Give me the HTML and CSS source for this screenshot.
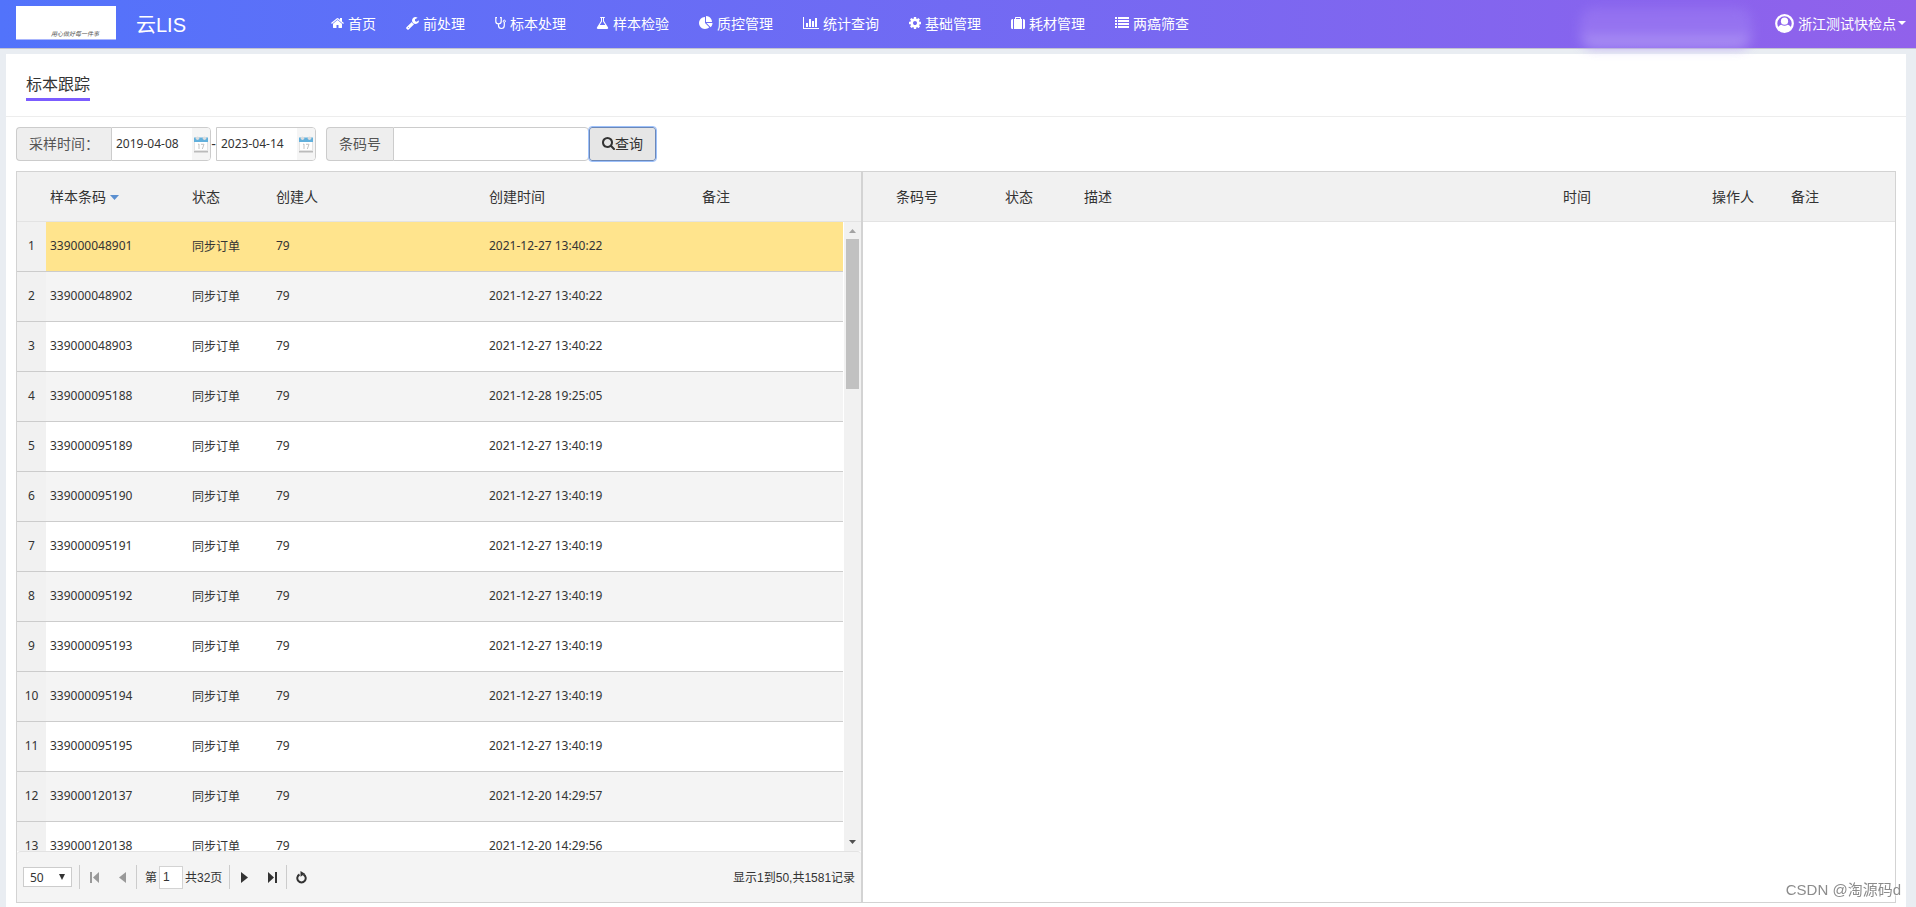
FILE: index.html
```html
<!DOCTYPE html>
<html lang="zh-CN">
<head>
<meta charset="utf-8">
<title>云LIS - 标本跟踪</title>
<link rel="stylesheet" href="styles.css">
</head>
<body>
<header class="topbar">
  <div class="logo"><span class="logo-slogan">用心做好每一件事</span></div>
  <div class="brand">云LIS</div>
  <nav class="menu">
    <a class="menu-item" href="#"><svg width="13" height="14" viewBox="64 0 1664 1792"><path d="M1472 992v480q0 26-19 45t-45 19h-384v-384h-256v384h-384q-26 0-45-19t-19-45v-480q0-1 .5-3t.5-3l575-474 575 474q1 2 1 6zm223-69l-62 74q-8 9-21 11h-3q-13 0-21-7l-692-577-692 577q-12 8-24 7-13-2-21-11l-62-74q-8-10-7-23.5t11-21.5l719-599q32-26 76-26t76 26l244 204v-195q0-14 9-23t23-9h192q14 0 23 9t9 23v408l219 182q10 8 11 21.5t-7 23.5z"/></svg>首页</a>
    <a class="menu-item" href="#"><svg width="13" height="14" viewBox="64 0 1664 1792"><path d="M448 1472q0-26-19-45t-45-19-45 19-19 45 19 45 45 19 45-19 19-45zm644-420l-682 682q-37 37-90 37-52 0-91-37l-106-108q-38-36-38-90 0-53 38-91l681-681q39 98 114.5 173.5t173.5 114.5zm634-435q0 39-23 106-47 134-164.5 217.5t-258.5 83.5q-185 0-316.5-131.5t-131.5-316.5 131.5-316.5 316.5-131.5q58 0 121.5 16.5t107.5 46.5q16 11 16 28t-16 28l-293 169v224l193 107q5-3 79-48.5t135.5-81 70.5-35.5q15 0 23.5 10t8.5 25z"/></svg>前处理</a>
    <a class="menu-item" href="#"><svg width="11" height="14" viewBox="0 0 11 14"><path d="M2 1.6H.8v3.6a2.7 2.7 0 0 0 5.4 0V1.6H5M3.5 8v1.6a2.9 2.9 0 0 0 5.8 0V6.2" fill="none" stroke="currentColor" stroke-width="1.2"/><circle cx="9.3" cy="5.2" r="1.1" fill="none" stroke="currentColor"/></svg>标本处理</a>
    <a class="menu-item" href="#"><svg width="13" height="14" viewBox="64 0 1664 1792"><path d="M1591 1448q56 89 21.500 152.500t-140.500 63.500h-1152q-106 0-140.500-63.500t21.500-152.500l503-793v-399h-64q-26 0-45-19t-19-45 19-45 45-19h512q26 0 45 19t19 45-19 45-45 19h-64v399zm-779-725l-272 429h712l-272-429-20-31v-436h-128v436z"/></svg>样本检验</a>
    <a class="menu-item" href="#"><svg width="14" height="14" viewBox="0 0 1792 1792"><path d="M768 890l546 546q-106 108-247.500 168t-298.500 60q-209 0-385.500-103t-279.500-279.500-103-385.500 103-385.500 279.500-279.500 385.500-103v762zm187 6h773q0 157-60 298.500t-168 247.500zm709-128h-768v-768q209 0 385.500 103t279.500 279.500 103 385.500z"/></svg>质控管理</a>
    <a class="menu-item" href="#"><svg width="16" height="14" viewBox="0 0 2048 1792"><path d="M640 896v512h-256v-512h256zm384-512v1024h-256v-1024h256zm1024 1152v128h-2048v-1536h128v1408h1920zm-640-896v768h-256v-768h256zm384-384v1152h-256v-1152h256z"/></svg>统计查询</a>
    <a class="menu-item" href="#"><svg width="12" height="14" viewBox="128 0 1536 1792"><path d="M1152 896q0-106-75-181t-181-75-181 75-75 181 75 181 181 75 181-75 75-181zm512-109v222q0 12-8 23t-20 13l-185 28q-19 54-39 91 35 50 107 138 10 12 10 25t-9 23q-27 37-99 108t-94 71q-12 0-26-9l-138-108q-44 23-91 38-16 136-29 186-7 28-36 28h-222q-14 0-24.500-8.500t-11.500-21.500l-28-184q-49-16-90-37l-141 107q-10 9-25 9-14 0-25-11-126-114-165-168-7-10-7-23 0-12 8-23 15-21 51-66.500t54-70.500q-27-50-41-99l-183-27q-13-2-21-12.500t-8-23.500v-222q0-12 8-23t19-13l186-28q14-46 39-92-40-57-107-138-10-12-10-24 0-10 9-23 26-36 98.500-107.500t94.500-71.500q13 0 26 10l138 107q44-23 91-38 16-136 29-186 7-28 36-28h222q14 0 24.500 8.500t11.500 21.500l28 184q49 16 90 37l142-107q9-9 24-9 13 0 25 10 129 119 165 170 7 8 7 22 0 12-8 23-15 21-51 66.500t-54 70.500q26 50 41 98l183 28q13 2 21 12.500t8 23.500z"/></svg>基础管理</a>
    <a class="menu-item" href="#"><svg width="14" height="14" viewBox="0 0 14 14"><path d="M1.500 3H2v10h-.5A1.500 1.500 0 0 1 0 11.500v-7A1.500 1.500 0 0 1 1.500 3zM3 3h1V1.700C4 1.300 4.300 1 4.700 1h4.600c.4 0 .7.300.7.700V3h1v10H3zm2-1v1h4V2zM12 3h.5A1.500 1.500 0 0 1 14 4.500v7a1.500 1.500 0 0 1-1.500 1.500H12z"/></svg>耗材管理</a>
    <a class="menu-item" href="#"><svg width="14" height="14" viewBox="0 0 14 14"><path d="M0 1h2v2H0zM3 1h11v2H3zM0 4h2v2H0zM3 4h11v2H3zM0 7h2v2H0zM3 7h11v2H3zM0 10h2v2H0zM3 10h11v2H3z"/></svg>两癌筛查</a>
  </nav>
  <div class="notice-haze"></div>
  <button class="account" type="button">
    <svg width="19" height="19" viewBox="0 0 19 19"><circle cx="9.500" cy="9.500" r="8.300" fill="none" stroke="currentColor" stroke-width="2.200"/><circle cx="9.500" cy="7.200" r="3.600"/><path d="M2.500 14.500c1-2.700 2.600-3.600 3.900-3.800 1.800 1.500 4.400 1.500 6.200 0 1.300.2 2.900 1.100 3.900 3.800-3 4.500-11 4.500-14 0z"/></svg>
    <span>浙江测试快检点</span>
    <svg class="account-caret" width="8" height="4" viewBox="0 0 8 4"><path d="M0 0h8L4 4z"/></svg>
  </button>
</header>

<main class="page">
  <div class="title-bar"><h1 class="title">标本跟踪</h1></div>

  <form class="filters">
    <div class="field">
      <label class="addon addon-wide" for="from">采样时间：</label>
      <div class="date">
        <input id="from" type="text" value="2019-04-08">
        <button class="date-button" type="button" aria-label="选择日期"><svg width="14" height="17" viewBox="0 0 14 17"><path d="M0 5h14v11H0z" fill="#e4e4e4"/><path d="M1 6h12v8H1z" fill="#fff"/><path d="M0 15h14v1.500H0z" fill="#bbb"/><path d="M0 1.500h14V6H0z" fill="#62b0dc"/><circle cx="3.500" cy="2.200" r="1.700" fill="#ddd"/><circle cx="10.500" cy="2.200" r="1.700" fill="#ddd"/><path d="M4 8.500l1-.5v5M7 8.300h3L8.300 13" fill="none" stroke="#c4c4c4"/></svg></button>
      </div>
    </div>
    <span class="range-dash">-</span>
    <div class="date">
      <input type="text" value="2023-04-14" aria-label="结束日期">
      <button class="date-button" type="button" aria-label="选择日期"><svg width="14" height="17" viewBox="0 0 14 17"><path d="M0 5h14v11H0z" fill="#e4e4e4"/><path d="M1 6h12v8H1z" fill="#fff"/><path d="M0 15h14v1.500H0z" fill="#bbb"/><path d="M0 1.500h14V6H0z" fill="#62b0dc"/><circle cx="3.500" cy="2.200" r="1.700" fill="#ddd"/><circle cx="10.500" cy="2.200" r="1.700" fill="#ddd"/><path d="M4 8.500l1-.5v5M7 8.300h3L8.300 13" fill="none" stroke="#c4c4c4"/></svg></button>
    </div>
    <div class="field barcode-field">
      <label class="addon" for="barcode">条码号</label>
      <input class="barcode" id="barcode" type="text">
    </div>
    <button class="search" type="button"><svg width="13" height="14" viewBox="64 0 1664 1792"><path d="M1216 832q0-185-131.500-316.500t-316.500-131.500-316.500 131.500-131.500 316.500 131.500 316.500 316.500 131.500 316.500-131.500 131.500-316.500zm512 832q0 52-38 90t-90 38q-54 0-90-38l-343-342q-179 124-399 124-143 0-273.500-55.500t-225-150-150-225-55.500-273.500 55.500-273.500 150-225 225-150 273.500-55.500 273.500 55.500 225 150 150 225 55.500 273.500q0 220-124 399l343 343q37 37 37 90z"/></svg>查询</button>
  </form>

  <div class="split">
    <section class="pane pane-list">
      <div class="grid-area">
        <table class="grid">
          <colgroup><col class="c-num"><col class="c-code"><col class="c-state"><col class="c-user"><col class="c-time"><col></colgroup>
          <thead><tr><th></th><th>样本条码<svg class="sort" width="9" height="5" viewBox="0 0 9 5"><path d="M0 0h9L4.500 5z"/></svg></th><th>状态</th><th>创建人</th><th>创建时间</th><th>备注</th></tr></thead>
          <tbody>
            <tr class="selected"><td>1</td><td>339000048901</td><td>同步订单</td><td>79</td><td>2021-12-27 13:40:22</td><td></td></tr>
            <tr><td>2</td><td>339000048902</td><td>同步订单</td><td>79</td><td>2021-12-27 13:40:22</td><td></td></tr>
            <tr><td>3</td><td>339000048903</td><td>同步订单</td><td>79</td><td>2021-12-27 13:40:22</td><td></td></tr>
            <tr><td>4</td><td>339000095188</td><td>同步订单</td><td>79</td><td>2021-12-28 19:25:05</td><td></td></tr>
            <tr><td>5</td><td>339000095189</td><td>同步订单</td><td>79</td><td>2021-12-27 13:40:19</td><td></td></tr>
            <tr><td>6</td><td>339000095190</td><td>同步订单</td><td>79</td><td>2021-12-27 13:40:19</td><td></td></tr>
            <tr><td>7</td><td>339000095191</td><td>同步订单</td><td>79</td><td>2021-12-27 13:40:19</td><td></td></tr>
            <tr><td>8</td><td>339000095192</td><td>同步订单</td><td>79</td><td>2021-12-27 13:40:19</td><td></td></tr>
            <tr><td>9</td><td>339000095193</td><td>同步订单</td><td>79</td><td>2021-12-27 13:40:19</td><td></td></tr>
            <tr><td>10</td><td>339000095194</td><td>同步订单</td><td>79</td><td>2021-12-27 13:40:19</td><td></td></tr>
            <tr><td>11</td><td>339000095195</td><td>同步订单</td><td>79</td><td>2021-12-27 13:40:19</td><td></td></tr>
            <tr><td>12</td><td>339000120137</td><td>同步订单</td><td>79</td><td>2021-12-20 14:29:57</td><td></td></tr>
            <tr><td>13</td><td>339000120138</td><td>同步订单</td><td>79</td><td>2021-12-20 14:29:56</td><td></td></tr>
          </tbody>
        </table>
        <div class="scroll">
          <div class="scroll-head"></div>
          <div class="scroll-track">
            <svg width="7" height="4" viewBox="0 0 7 4"><path d="M0 4h7L3.500 0z" fill="#a3a3a3"/></svg>
            <div class="scroll-thumb"></div>
            <svg class="scroll-down" width="7" height="4" viewBox="0 0 7 4"><path d="M0 0h7L3.500 4z" fill="#505050"/></svg>
          </div>
        </div>
      </div>
      <footer class="pager">
        <div class="page-size">
          <select aria-label="每页条数"><option>50</option></select>
          <svg class="page-size-arrow" width="6" height="6" viewBox="0 0 6 6"><path d="M0 0h6L3 6z"/></svg>
        </div>
        <i class="sep"></i>
        <button class="nav-button" type="button" aria-label="首页" disabled><svg width="9" height="11" viewBox="0 0 9 11"><path d="M0 0h2v11H0zM9 0v11L3 5.500z"/></svg></button>
        <button class="nav-button" type="button" aria-label="上一页" disabled><svg width="7" height="11" viewBox="0 0 7 11"><path d="M7 0v11L0 5.500z"/></svg></button>
        <i class="sep"></i>
        <label class="page-label" for="pageno">第</label>
        <input class="page-no" id="pageno" type="text" value="1">
        <span class="page-label">共32页</span>
        <i class="sep"></i>
        <button class="nav-button" type="button" aria-label="下一页"><svg width="7" height="11" viewBox="0 0 7 11"><path d="M0 0v11l7-5.500z"/></svg></button>
        <button class="nav-button" type="button" aria-label="末页"><svg width="9" height="11" viewBox="0 0 9 11"><path d="M7 0h2v11H7zM0 0v11l6-5.500z"/></svg></button>
        <i class="sep"></i>
        <button class="nav-button" type="button" aria-label="刷新"><svg width="11" height="13" viewBox="0 0 11 13"><path d="M3.500 3.500A4.200 4.200 0 1 0 7.500 3.500" fill="none" stroke="currentColor" stroke-width="2"/><path d="M4.500 0l4.500 2.800-4.500 3z"/></svg></button>
        <span class="summary">显示1到50,共1581记录</span>
      </footer>
    </section>

    <section class="pane pane-detail">
      <table class="grid">
        <colgroup><col class="c-num"><col class="d-code"><col class="d-state"><col><col class="d-time"><col class="d-user"><col class="d-note"></colgroup>
        <thead><tr><th></th><th>条码号</th><th>状态</th><th>描述</th><th>时间</th><th>操作人</th><th>备注</th></tr></thead>
      </table>
    </section>
  </div>
</main>
<div class="watermark">CSDN @淘源码d</div>
</body>
</html>
```

FILE: styles.css
```css
* { box-sizing: border-box; }

body {
  margin: 0;
  height: 100vh;
  overflow: hidden;
  display: flex;
  flex-direction: column;
  background: #e9edf2;
  color: #333;
  font-family: "Liberation Sans", "Noto Sans CJK SC", sans-serif;
  font-size: 14px;
}

input, button, select { font: inherit; color: inherit; }
button { cursor: pointer; }
svg { flex: none; fill: currentColor; }

.topbar {
  position: relative;
  flex: none;
  display: flex;
  align-items: center;
  height: 49px;
  padding: 0 10px 2px 16px;
  border-bottom: 1px solid #c3c3cf;
  background: linear-gradient(90deg, #5273fb, #9161eb) padding-box;
  color: #fff;
}

.logo {
  display: flex;
  justify-content: flex-end;
  align-items: flex-end;
  width: 100px;
  height: 34px;
  padding: 0 17px 1px 0;
  background: #fff;
  border-bottom: 1px solid #aab6fd;
  color: #555;
}
.logo-slogan { font-size: 6px; line-height: 8px; font-style: italic; white-space: nowrap; }
.brand { width: 195px; padding-left: 20px; font-size: 20px; }

.menu { display: flex; gap: 30px; padding-left: 20px; }
.menu-item { display: flex; align-items: center; gap: 4px; color: #fff; text-decoration: none; white-space: nowrap; }

.notice-haze {
  position: absolute;
  top: 8px;
  right: 164px;
  width: 172px;
  height: 40px;
  border-radius: 14px;
  background: linear-gradient(#9876f1 0%, #9876f1 55%, #bda9f7 100%);
  filter: blur(6px);
  opacity: 0.8;
}

.account {
  display: flex;
  align-items: center;
  gap: 4px;
  margin-left: auto;
  padding: 0;
  border: 0;
  background: none;
  color: #fff;
}
.account-caret { margin-left: -2px; }

.page {
  flex: 1;
  min-height: 0;
  display: flex;
  flex-direction: column;
  margin: 5px 10px 0 6px;
  padding-bottom: 4px;
  background: #fff;
}

.title-bar { flex: none; height: 63px; padding: 19px 20px 0; border-bottom: 1px solid #ededed; }
.title {
  display: inline-block;
  margin: 0;
  padding-bottom: 1px;
  border-bottom: 3px solid #7b5cff;
  font-size: 16px;
  line-height: 24px;
  font-weight: normal;
}

.filters { flex: none; display: flex; height: 54px; padding: 10px; }
.field { display: flex; }
.addon {
  display: flex;
  align-items: center;
  padding: 0 12px 2px;
  border: 1px solid #ccc;
  border-right: 0;
  border-radius: 4px 0 0 4px;
  background: #eee;
  color: #555;
}
.addon-wide { width: 95px; white-space: nowrap; }
.date {
  display: flex;
  width: 100px;
  border: 1px solid #ccc;
  border-radius: 0 4px 4px 0;
  overflow: hidden;
}
.date input {
  flex: 1;
  min-width: 0;
  border: 0;
  padding: 0 4px 2px;
  font-family: "Noto Sans", sans-serif;
  font-size: 12px;
}
.date-button {
  display: flex;
  align-items: center;
  width: 18px;
  padding: 0 2px;
  border: 0;
  background: #f5f5f5;
}
.range-dash { width: 5px; text-align: center; line-height: 34px; }
.barcode-field { margin-left: 10px; }
.barcode { width: 196px; border: 1px solid #ccc; border-radius: 0 4px 4px 0; }
.search {
  display: flex;
  align-items: center;
  justify-content: center;
  width: 67px;
  padding: 0 0 2px;
  border: 1px solid #6c88b8;
  border-radius: 3px;
  outline: 1px solid #9dc1fb;
  background: #e6e6e6;
}

.split {
  flex: 1;
  min-height: 0;
  display: flex;
  margin: 0 10px;
  border: 1px solid #d3d3d3;
}
.pane { min-width: 0; overflow: hidden; }
.pane-list { flex: 0 0 calc(45% + 1px); display: flex; flex-direction: column; border-right: 2px solid #d3d3d3; }
.pane-detail { flex: 1; }

.grid-area { flex: 1; min-height: 0; display: flex; overflow: hidden; }
.grid { flex: 1; align-self: flex-start; width: 100%; table-layout: fixed; border-collapse: separate; border-spacing: 0; }
.grid th, .grid td { height: 50px; padding: 0 4px 2px; text-align: left; white-space: nowrap; }
.grid th { background: #f1f1f1; border-bottom: 1px solid #e3e3e3; font-weight: normal; }
.grid td {
  border-bottom: 1px solid #ccc;
  font-family: "Noto Sans", "Noto Sans CJK SC", sans-serif;
  font-size: 12px;
}
.grid td:first-child { padding: 0 0 2px; text-align: center; }
.grid tbody tr:nth-child(even) { background: #f4f4f4; }
.grid tbody tr.selected { background: #ffe48d; }
.grid tbody td:first-child { background: #f1f1f1; }
.sort { margin: 0 0 2px 4px; fill: #5a8fd0; }

.c-num { width: 29px; }
.c-code { width: 142px; }
.c-state { width: 84px; }
.c-user, .c-time { width: 213px; }
.d-code { width: 109px; }
.d-state, .d-user { width: 79px; }
.d-time { width: 149px; }
.d-note { width: 108px; }

.scroll { flex: none; width: 18px; display: flex; flex-direction: column; }
.scroll-head { flex: none; height: 50px; background: #f1f1f1; border-bottom: 1px solid #e3e3e3; }
.scroll-track {
  flex: 1;
  display: flex;
  flex-direction: column;
  align-items: center;
  gap: 6px;
  margin-left: 1px;
  padding: 7px 0;
  background: #f1f1f1;
}
.scroll-thumb { width: 13px; height: 150px; background: #c1c1c1; }
.scroll-down { margin-top: auto; }

.pager {
  flex: none;
  display: flex;
  align-items: center;
  height: 51px;
  padding: 0 6px;
  border-top: 1px solid #e3e3e3;
  border-radius: 4px 4px 0 0;
  background: #f4f4f4;
  font-size: 12px;
}
.page-size { position: relative; display: flex; width: 49px; margin-right: 7px; }
.page-size select {
  appearance: none;
  width: 100%;
  height: 20px;
  padding: 0 6px;
  border: 1px solid #ccc;
  border-radius: 0;
  background: #fff;
  font-family: "Noto Sans", sans-serif;
}
.page-size-arrow { position: absolute; top: 7px; right: 7px; pointer-events: none; }
.sep { width: 1px; height: 24px; background: #ccc; }
.nav-button {
  display: flex;
  align-items: center;
  justify-content: center;
  width: 28px;
  height: 24px;
  padding: 0;
  border: 0;
  background: none;
}
.nav-button:disabled { color: #999; }
.page-label { padding: 0 2px 2px; }
.sep + .page-label { padding-left: 8px; }
.page-no + .page-label { padding-right: 7px; }
.page-no { width: 24px; height: 23px; padding: 0 3px; border: 1px solid #d3d3d3; background: #fff; }
.summary { margin-left: auto; padding-bottom: 2px; }

.watermark {
  position: fixed;
  right: 15px;
  bottom: 6px;
  color: #8c8c8c;
  font-size: 15px;
  line-height: 22px;
  text-shadow: 1px 1px 0 #fff;
}
```
